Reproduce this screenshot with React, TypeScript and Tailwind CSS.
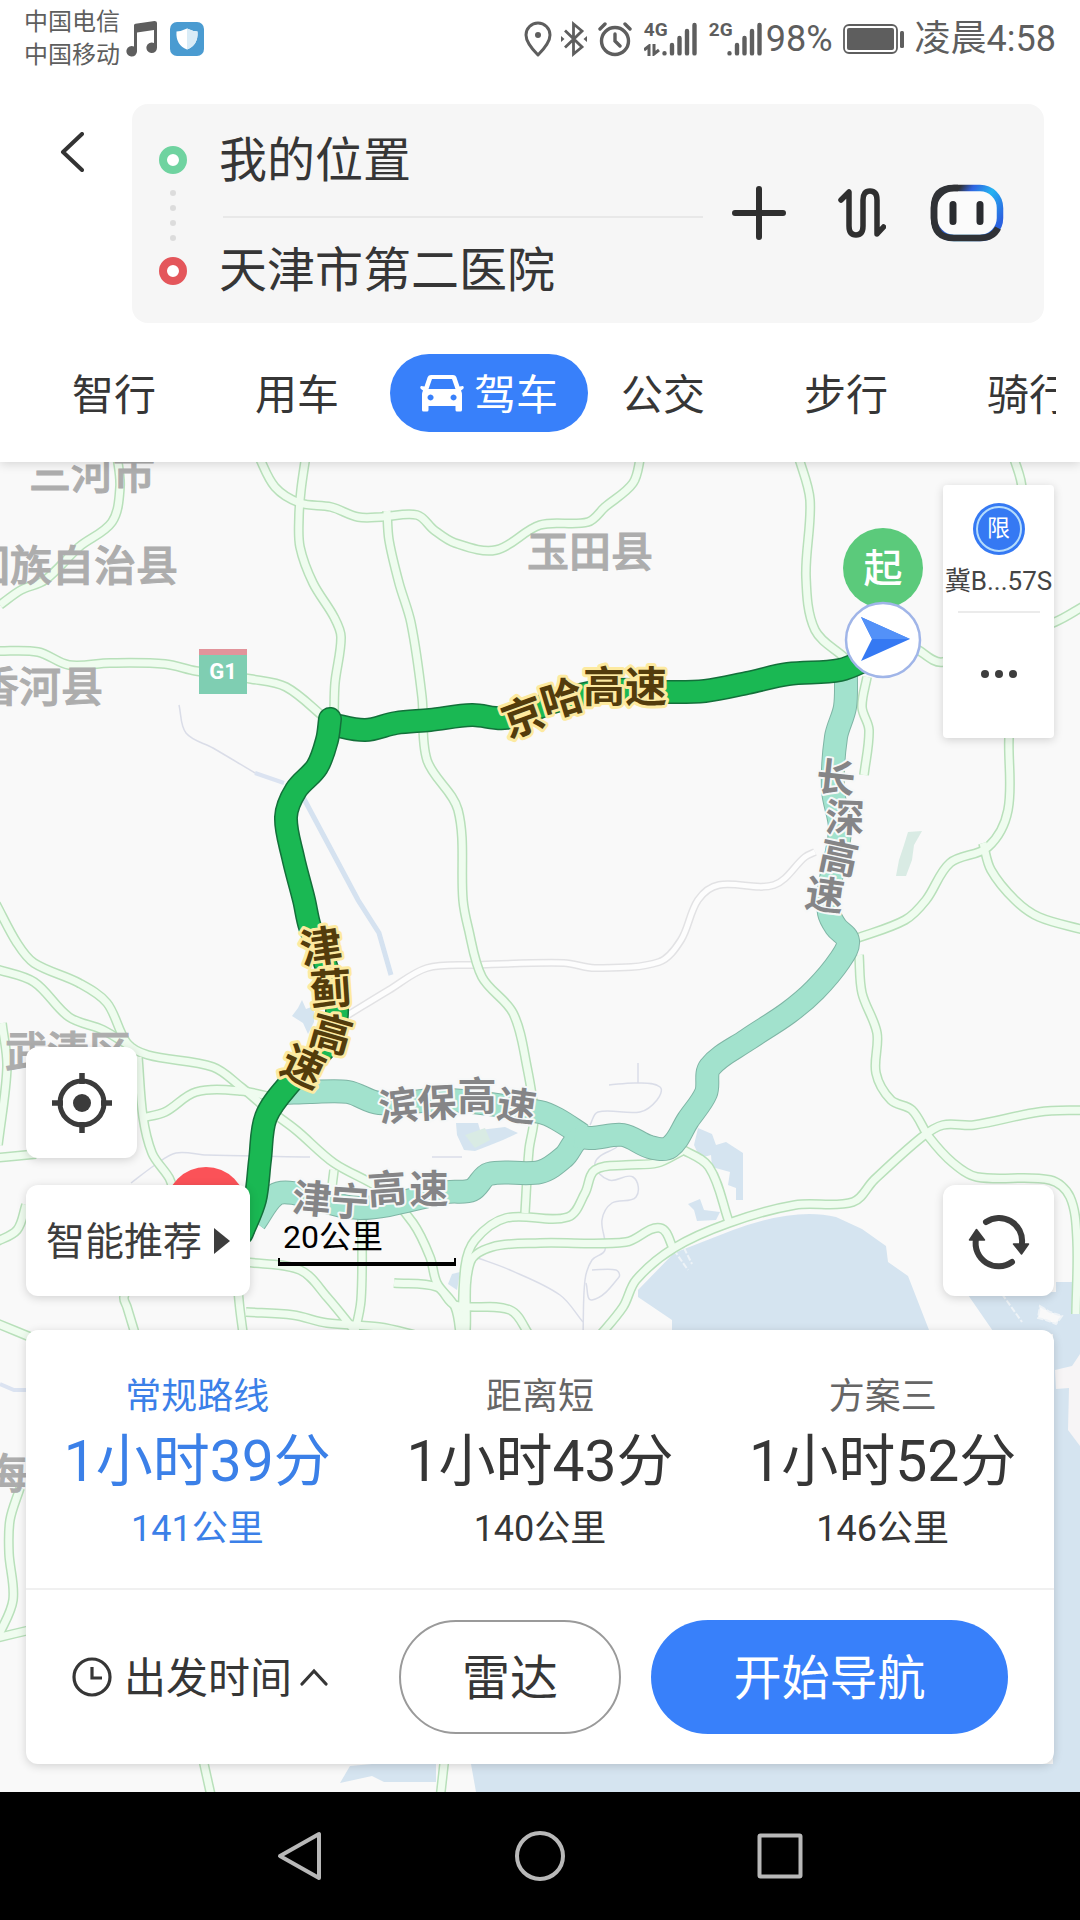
import { useState } from "react";

type Point = [number, number];

// smooth curve that runs through every point
const toPath = (points: Point[]) => {
  let d = `M${points[0][0]} ${points[0][1]}`;
  for (let i = 0; i < points.length - 1; i++) {
    const before = points[i - 1] || points[i];
    const from = points[i];
    const to = points[i + 1];
    const after = points[i + 2] || to;
    const length = Math.hypot(to[0] - from[0], to[1] - from[1]);
    const pull = (a: Point, b: Point) => {
      const span = Math.hypot(b[0] - a[0], b[1] - a[1]) || 1;
      return [((b[0] - a[0]) / span) * length * 0.33, ((b[1] - a[1]) / span) * length * 0.33];
    };
    const [ax, ay] = pull(before, to);
    const [bx, by] = pull(from, after);
    d += `C${from[0] + ax} ${from[1] + ay} ${to[0] - bx} ${to[1] - by} ${to[0]} ${to[1]}`;
  }
  return d;
};

const highways: Point[][] = [
  [[117, 455], [120, 487], [112, 522], [79, 547], [45, 580], [21, 590], [0, 605]],
  [[-4, 651], [38, 652], [69, 665], [110, 663], [165, 664], [196, 671], [251, 679], [286, 687], [325, 718]],
  [[306, 455], [301, 490], [299, 517], [300, 547], [313, 583], [334, 617], [341, 637], [335, 683], [334, 715]],
  [[258, 455], [275, 487], [300, 503], [331, 507], [358, 517], [382, 517], [417, 515], [434, 530], [455, 543], [496, 550], [540, 525], [588, 522], [605, 507], [633, 483], [641, 455]],
  [[387, 511], [389, 540], [399, 583], [411, 623], [422, 697], [427, 760], [458, 810], [463, 900], [468, 927], [482, 977], [513, 1013], [527, 1067], [534, 1117], [529, 1150], [525, 1213]],
  [[798, 455], [810, 500], [806, 577], [815, 630], [845, 658]],
  [[867, 677], [862, 707], [869, 730], [864, 775]],
  [[915, 648], [943, 662], [1055, 622], [1084, 606]],
  [[1013, 455], [1022, 490], [1009, 738], [1008, 810], [988, 847], [950, 863], [926, 900], [905, 920], [855, 939]],
  [[983, 843], [991, 870], [1015, 900], [1039, 917], [1084, 930]],
  [[-4, 904], [17, 943], [34, 963], [79, 983], [107, 1003], [127, 1043], [148, 1055], [213, 1067], [241, 1087], [265, 1107], [296, 1130], [334, 1163], [382, 1190], [413, 1223], [430, 1257], [437, 1283], [455, 1307], [461, 1340]],
  [[-4, 969], [34, 982], [69, 1017], [103, 1030], [131, 1047]],
  [[141, 1118], [165, 1112], [196, 1092], [241, 1091], [280, 1099]],
  [[138, 1057], [143, 1117], [152, 1153], [172, 1190], [140, 1250], [124, 1297], [127, 1307], [137, 1340]],
  [[2, 1023], [7, 1067], [-2, 1145]],
  [[-4, 1158], [36, 1154]],
  [[-4, 1242], [17, 1230], [26, 1205]],
  [[-4, 1323], [40, 1341]],
  [[245, 1262], [300, 1270], [327, 1297], [362, 1340]],
  [[238, 1290], [240, 1310], [244, 1340]],
  [[246, 1312], [293, 1315], [327, 1323], [379, 1327], [420, 1336]],
  [[362, 1217], [361, 1300], [353, 1340]],
  [[334, 1170], [331, 1195]],
  [[394, 1283], [437, 1287], [455, 1305], [510, 1310], [530, 1336]],
  [[462, 1340], [465, 1267], [475, 1240], [506, 1218], [568, 1217], [585, 1193], [595, 1170], [626, 1165], [657, 1163], [682, 1151]],
  [[466, 1330], [470, 1263], [492, 1247], [540, 1243], [626, 1242], [660, 1228], [674, 1250]],
  [[859, 955], [862, 993], [877, 1033], [876, 1073], [891, 1100], [912, 1110], [929, 1137], [953, 1163], [977, 1177], [1050, 1180], [1070, 1197], [1077, 1240], [1076, 1314]],
  [[1084, 1110], [1039, 1112], [974, 1125], [943, 1125], [922, 1137], [874, 1180], [853, 1202], [795, 1205], [729, 1223], [674, 1248], [636, 1280], [623, 1307], [596, 1340]],
  [[680, 1148], [709, 1167], [729, 1222]],
  [[20, 1488], [10, 1520], [9, 1553], [13, 1600], [-2, 1637]],
  [[-4, 1638], [30, 1630]],
  [[202, 1755], [212, 1800]],
  [[445, 1755], [440, 1800]],
];

const minorRoad: Point[] = [
  [815, 852], [805, 857], [774, 885], [719, 885], [698, 900], [681, 940], [659, 962], [595, 968],
  [564, 963], [475, 965], [427, 968], [389, 990], [348, 1015],
];

const streams: Point[][] = [
  [[179, 705], [186, 733], [213, 748], [255, 773]],
  [[609, 1085], [636, 1083], [660, 1087], [657, 1100], [640, 1112], [598, 1112], [590, 1125]],
  [[638, 1063], [638, 1083]],
  [[617, 1147], [595, 1163], [609, 1180], [633, 1177], [636, 1197], [612, 1203], [602, 1220], [605, 1250], [592, 1260], [585, 1280], [583, 1335]],
  [[592, 1270], [616, 1270], [619, 1277], [592, 1300], [586, 1283]],
  [[131, 1183], [155, 1165], [176, 1153], [207, 1155], [310, 1157]],
  [[475, 1257], [510, 1270], [560, 1295], [583, 1322]],
  [[432, 1157], [462, 1157]],
];

const altRoutes: Point[][] = [
  [[285, 1093], [310, 1092], [348, 1092], [379, 1103], [450, 1100], [540, 1112], [557, 1119], [582, 1135]],
  [[255, 1222], [275, 1195], [293, 1193], [360, 1208], [448, 1192], [472, 1190], [489, 1174], [540, 1172], [564, 1157], [574, 1143], [582, 1135]],
  [[846, 670], [845, 707], [836, 737], [833, 790], [840, 830], [829, 890], [829, 913], [836, 927], [848, 941], [840, 960], [815, 990], [788, 1013], [747, 1040], [710, 1067], [706, 1093], [688, 1120], [670, 1147], [650, 1147], [623, 1135], [592, 1138], [575, 1136]],
];

const mainRoute: Point[][] = [
  [[330, 724], [365, 730], [396, 723], [430, 720], [472, 715], [506, 718], [560, 700], [610, 690], [667, 692], [705, 691], [747, 683], [788, 674], [840, 670], [872, 657]],
  [[330, 719], [327, 740], [317, 767], [296, 790], [286, 817], [293, 857], [304, 900], [310, 927], [324, 960], [337, 1008], [327, 1045], [290, 1083], [266, 1117], [260, 1160], [255, 1200], [242, 1233]],
];

const places = [
  { name: "三河市", x: 29, y: 489 },
  { name: "回族自治县", x: -32, y: 581 },
  { name: "香河县", x: -23, y: 702 },
  { name: "玉田县", x: 527, y: 567 },
  { name: "武清区", x: 5, y: 1067 },
  { name: "海", x: -15, y: 1489 },
];

// x, y, rotation of each character along the road
type RoadLabel = { text: string; active?: boolean; at: [number, number, number][] };

const roadLabels: RoadLabel[] = [
  { text: "京哈高速", active: true, at: [[523, 717, -20], [562, 699, -17], [604, 687, 0], [646, 687, 0]] },
  { text: "津蓟高速", active: true, at: [[321, 947, -8], [331, 989, -4], [331, 1034, 16], [303, 1067, 25]] },
  { text: "长深高速", at: [[836, 777, 6], [845, 817, 2], [839, 857, 12], [825, 894, 8]] },
  { text: "滨保高速", at: [[398, 1105, -6], [437, 1102, -3], [477, 1095, 0], [517, 1105, 8]] },
  { text: "津宁高速", at: [[312, 1198, 5], [350, 1201, 4], [387, 1188, -4], [429, 1188, 0]] },
];

const tabs = ["智行", "用车", "驾车", "公交", "步行", "骑行"];

const routes = [
  { title: "常规路线", time: "1小时39分", distance: "141公里" },
  { title: "距离短", time: "1小时43分", distance: "140公里" },
  { title: "方案三", time: "1小时52分", distance: "146公里" },
];

const SignalBars = () => (
  <svg className="h-[34px] w-[35px]" viewBox="0 0 35 34" stroke="currentColor" strokeWidth="4.4" strokeLinecap="round">
    <path d="M2.5 31.2v.2M10 23v8.4M17.5 16v15.4M25 9v22.4M32.5 3v28.4" />
  </svg>
);

const StatusBar = () => (
  <div className="flex h-[76px] items-center justify-between pt-px pr-6 pl-6 text-[#5e5e5e]">
    <div className="flex items-center">
      <div className="text-2xl leading-[33px]">
        <p>中国电信</p>
        <p>中国移动</p>
      </div>
      <svg className="mr-3 ml-1.5 h-9 w-8" viewBox="0 0 32 36" fill="currentColor">
        <path d="M8 4.5Q8 3 9.500 2.700L28.500 0Q31 0 31 2V26.500A5.300 5.300 0 1 1 28 22V9L11 11.500V30A5.300 5.300 0 1 1 8 25.500Z" />
      </svg>
      <svg className="h-[34px] w-[34px]" viewBox="0 0 34 34">
        <rect width="34" height="34" rx="7" fill="#4a9bd1" />
        <path d="M17 6.500Q22 9 27.500 9.500Q28.500 23 17 27.500Q5.500 23 6.500 9.500Q12 9 17 6.500Z" fill="#fff" />
        <path d="M17 6.500Q22 9 27.500 9.500Q28.500 23 17 27.500Z" fill="#d9ecf7" />
      </svg>
    </div>
    <div className="flex items-center text-[36px] leading-10">
      <svg className="mr-2 h-9 w-7" viewBox="0 0 28 36" fill="none" stroke="currentColor" strokeWidth="3">
        <path d="M14 34Q2 22 2 14A12 12 0 0 1 26 14Q26 22 14 34Z" strokeLinejoin="round" />
        <circle cx="14" cy="14" r="3" fill="currentColor" stroke="none" />
      </svg>
      <svg className="mr-2.5 h-9 w-7" viewBox="0 0 28 36" fill="none" stroke="currentColor" strokeWidth="2.800">
        <path d="M5 9.500L22 26L13.500 33V3L22 10L5 26.500" />
        <path d="M1 15l3.500 3L1 21ZM27 15l-3.500 3L27 21Z" fill="currentColor" stroke="none" />
      </svg>
      <svg className="mr-3 h-9 w-[34px]" viewBox="0 0 34 36" fill="none" stroke="currentColor" strokeWidth="3.400" strokeLinecap="round">
        <circle cx="17" cy="20" r="13.500" />
        <path d="M17 13v7l5 5M2 8l5-5M32 8l-5-5" />
      </svg>
      <div className="flex h-[34px] w-[18px] flex-col justify-between">
        <span className="text-[19px] leading-4 font-bold">4G</span>
        <svg className="h-3 w-4" viewBox="0 0 16 12" fill="none" stroke="currentColor" strokeWidth="3">
          <path d="M0 6l5-4v10M10 0v10l5-4" />
        </svg>
      </div>
      <SignalBars />
      <span className="ml-3 h-[34px] w-[18px] text-[19px] leading-4 font-bold">2G</span>
      <SignalBars />
      <span className="ml-1">98%</span>
      <svg className="mr-2.5 ml-2.5 h-[30px] w-[62px]" viewBox="0 0 62 30">
        <rect x="1" y="1" width="53" height="28" rx="5" fill="none" stroke="currentColor" strokeWidth="1.800" />
        <rect x="4" y="4" width="47" height="22" rx="2" fill="currentColor" />
        <rect x="57" y="7" width="4" height="17" rx="1.500" fill="currentColor" />
      </svg>
      <span>凌晨4:58</span>
    </div>
  </div>
);

const SearchHeader = () => (
  <div className="mt-7 flex pr-9">
    <button aria-label="返回" className="flex w-[132px] items-start pt-7 pl-[60px]">
      <svg className="h-10 w-6" viewBox="0 0 24 40" fill="none" stroke="#333" strokeWidth="4" strokeLinecap="round" strokeLinejoin="round">
        <path d="M22 2L3 20L22 38" />
      </svg>
    </button>
    <div className="flex flex-1 items-center rounded-2xl bg-[#f6f6f6] pr-10 pb-px pl-[27px]">
      <div className="flex flex-col items-center pt-1">
        <span className="size-7 rounded-full border-8 border-[#6fd3a0] bg-white" />
        <div className="flex flex-col gap-[9px] py-4">
          {[0, 1, 2, 3].map((dot) => (
            <span key={dot} className="size-1.5 rounded-full bg-[#dcdcdc]" />
          ))}
        </div>
        <span className="size-7 rounded-full border-8 border-[#e4565b] bg-white" />
      </div>
      <div className="ml-8 flex-1 text-5xl text-[#363636]">
        <input aria-label="起点" defaultValue="我的位置" className="block h-[112px] w-full bg-transparent pb-2 outline-none" />
        <div className="ml-1 h-0.5 bg-[#e8e8e8]" />
        <input aria-label="终点" defaultValue="天津市第二医院" className="block h-[104px] w-full bg-transparent pb-2 outline-none" />
      </div>
      <div className="ml-[29px] flex items-center gap-11">
        <button aria-label="添加途经点">
          <svg className="size-[54px]" viewBox="0 0 54 54" stroke="#2f2f2f" strokeWidth="6" strokeLinecap="round">
            <path d="M27 3v48M3 27h48" />
          </svg>
        </button>
        <button aria-label="交换起终点">
          <svg className="h-[50px] w-14" viewBox="-8 0 56 50" fill="none" stroke="#2f2f2f" strokeWidth="5.500" strokeLinecap="round" strokeLinejoin="round">
            <path d="M3 12L11 4V38Q11 47 18 47T25 38V12Q25 3 32 3T39 12V46L45.500 39" />
          </svg>
        </button>
        <button aria-label="语音助手">
          <svg className="h-[58px] w-[74px]" viewBox="0 0 74 58">
            <defs>
              <linearGradient id="assistant" gradientUnits="userSpaceOnUse" x1="26" y1="4" x2="72" y2="34">
                <stop offset="0.050" stopColor="#303236" />
                <stop offset="0.250" stopColor="#2f62e0" />
                <stop offset="0.580" stopColor="#25b4f2" />
                <stop offset="1" stopColor="#2b62e0" />
              </linearGradient>
            </defs>
            <rect x="4" y="4" width="66" height="50" rx="20" fill="#fbfbfb" stroke="url(#assistant)" strokeWidth="6.500" />
            <path d="M28 4H24Q4 4 4 24V34Q4 54 24 54H50Q63 54 68 44" fill="none" stroke="#303236" strokeWidth="6.500" />
            <path d="M23 20.500v17M50 20.500v17" stroke="#2a2c30" strokeWidth="7" strokeLinecap="round" />
          </svg>
        </button>
      </div>
    </div>
  </div>
);

const CarIcon = () => (
  <svg className="h-[38px] w-11" viewBox="0 0 44 38" fill="currentColor">
    <path
      fillRule="evenodd"
      d="M11 1H33Q35.500 1 36.300 3L39.500 12.500L43 12Q44.500 13.500 43 15L41 16.500Q42 18.500 42 21V36Q42 37.500 40.500 37.500H37Q35.500 37.500 35.500 36V32H8.500V36Q8.500 37.500 7 37.500H3.500Q2 37.500 2 36V21Q2 18.500 3 16.500L1 15Q-.5 13.500 1 12L4.500 12.500L7.700 3Q8.500 1 11 1ZM12 5L8.500 15H35.500L32 5ZM10.500 20.500a3 3 0 1 0 .1 0ZM33.500 20.500a3 3 0 1 0 .1 0Z"
    />
  </svg>
);

const TravelTabs = ({ active, onSelect }: { active: string; onSelect: (tab: string) => void }) => (
  <nav className="mr-6 flex h-[139px] items-center gap-[99px] overflow-hidden pl-[72px] text-[42px] text-[#363636]">
    {tabs.map((tab) =>
      tab === active ? (
        <button
          key={tab}
          onClick={() => onSelect(tab)}
          className="-mr-[66px] -ml-12 flex h-[78px] w-[198px] shrink-0 items-center justify-center gap-2.5 rounded-full bg-[#3880fa] text-white"
        >
          <CarIcon />
          <span className="pt-1.5">{tab}</span>
        </button>
      ) : (
        <button key={tab} onClick={() => onSelect(tab)} className="shrink-0 pt-1.5">
          {tab}
        </button>
      )
    )}
  </nav>
);

const MapCanvas = () => (
  <svg className="absolute inset-0 size-full" viewBox="0 462 1080 1330" preserveAspectRatio="xMidYMid slice">
    <rect x="-1000" y="0" width="3000" height="2400" fill="#f9f9f9" />

    {/* water */}
    <g fill="#d5e4f0">
      <path d="M638 1290L674 1253L733 1230Q795 1207 836 1217L862 1229L886 1246L888 1262L908 1276L929 1330H672V1320L638 1297Z" />
      <path d="M966 1292L995 1334H1080V1282H1056V1292Z" />
      <path d="M1053 1330H1080V1792H476L471 1764H1053Z" />
      <path d="M698 1128L712 1134L716 1145L726 1142L743 1153V1200H736V1188L728 1185L730 1172L712 1167L711 1155L700 1158L694 1145Z" />
      <path d="M688 1204L700 1199L704 1210L720 1212L716 1220L697 1221L694 1210Z" />
      <path d="M456 1123H478L480 1130L505 1127L518 1133L503 1140L488 1146L475 1151L464 1150L457 1135Z" />
      <path d="M292 1016L298 1008L302 1000L306 1009L314 1006V1022L308 1034L303 1023Z" />
      <path d="M448 1284L452 1274L460 1272L457 1290Z" />
      <path d="M340 1783L350 1766L372 1764H436V1782H384L372 1776Z" />
    </g>
    <path d="M465 1135L485 1128L490 1140L475 1148ZM904 845L908 832L922 831L914 845L912 860L906 876H896L899 860Z" fill="#d9ebe4" />
    <path d="M1055 1370L1072 1366L1080 1354V1446L1068 1430L1069 1388L1056 1389Z" fill="#f7f5f6" />
    <path d="M1040 1306L1050 1312L1062 1316L1056 1324L1046 1320L1038 1318ZM1002 1294L1022 1322M674 1250L688 1270M684 1248L692 1264" fill="#f9f9f9" stroke="#eef3f7" strokeWidth="2" strokeDasharray="6 2" />
    <path d="M303 797L358 900L379 933L391 975" fill="none" stroke="#d5e2f0" strokeWidth="5" />
    <path d="M255 773L284 783M0 1384L14 1390H27" fill="none" stroke="#dbe3f1" strokeWidth="4" />
    <g fill="none" stroke="#dadde8" strokeWidth="1.500">
      {streams.map((points, i) => (
        <path key={i} d={toPath(points)} />
      ))}
    </g>

    {/* road network */}
    <g fill="none" strokeLinejoin="round">
      <path d={toPath(minorRoad)} stroke="#e2e2e4" strokeWidth="8" />
      <path d={toPath(minorRoad)} stroke="#fdfdfd" strokeWidth="5" />
      {highways.map((points, i) => (
        <path key={i} d={toPath(points)} stroke="#b8e0ba" strokeWidth="10" />
      ))}
      {highways.map((points, i) => (
        <path key={i} d={toPath(points)} stroke="#effcef" strokeWidth="7" />
      ))}
    </g>

    <g>
      <rect x="199" y="649" width="48" height="45" fill="#7fceb2" />
      <rect x="199" y="649" width="48" height="6" fill="#e2949b" />
      <text x="223" y="679" textAnchor="middle" className="fill-white text-[22px] font-bold">G1</text>
    </g>

    <g className="fill-[#adadad] stroke-[#adadad] stroke-1 text-[42px] font-medium">
      {places.map((place) => (
        <text key={place.name} x={place.x} y={place.y}>{place.name}</text>
      ))}
    </g>

    {/* destination pin */}
    <circle cx="206" cy="1207" r="40" fill="#fb5258" />

    {/* routes */}
    <g fill="none" strokeLinejoin="round">
      {altRoutes.map((points, i) => (
        <path key={i} d={toPath(points)} stroke="#7fb5a5" strokeWidth="24" />
      ))}
      {altRoutes.map((points, i) => (
        <path key={i} d={toPath(points)} stroke="#a2e2cd" strokeWidth="22" />
      ))}
      {mainRoute.map((points, i) => (
        <g key={i} strokeLinecap="round">
          <path d={toPath(points)} stroke="#13703a" strokeWidth="24" />
          <path d={toPath(points)} stroke="#1ab853" strokeWidth="21" />
        </g>
      ))}
    </g>

    {roadLabels.map((label) =>
      label.at.map(([x, y, angle], i) => (
        <text
          key={`${label.text}${i}`}
          transform={`translate(${x} ${y}) rotate(${angle})`}
          y="15"
          textAnchor="middle"
          paintOrder="stroke"
          strokeLinejoin="round"
          className={
            label.active
              ? "fill-[#533c0c] stroke-[#fdeaa0] stroke-[6px] text-[42px] font-bold"
              : "fill-[#858587] stroke-[#f6f8f8] stroke-[4px] text-[39px] font-bold"
          }
        >
          {label.text[i]}
        </text>
      ))
    )}

    {/* start pin and current position */}
    <circle cx="883" cy="568" r="40" fill="#5bca7b" />
    <text x="883" y="582" textAnchor="middle" className="fill-white text-[39px] font-medium">起</text>
    <circle cx="883" cy="640" r="37" fill="#fff" stroke="#a0b5e8" strokeWidth="2.500" />
    <path d="M861 617L910 639L861 661L872 639Z" fill="#3579f3" />
    <path d="M861 617L910 639H872Z" fill="#5391f8" />
  </svg>
);

const cardClass = "bg-white shadow-[0_2px_10px_rgba(0,0,0,0.16)]";

const MapOverlay = () => (
  <div className="relative flex flex-1 flex-col px-[26px] pt-[23px] pb-7">
    <div className={`${cardClass} flex h-[253px] w-[111px] flex-col items-center self-end rounded-sm`}>
      <button className="flex flex-col items-center text-[26px] leading-8 whitespace-nowrap text-[#444]">
        <span className="mt-[18px] flex size-[52px] items-center justify-center rounded-full bg-[#3579f3] p-[3px]">
          <span className="flex size-full items-center justify-center rounded-full border-2 border-[#b4dcfc] text-[23px] text-white">限</span>
        </span>
        <span className="mt-2.5">冀B...57S</span>
      </button>
      <div className="mt-3.5 h-0.5 w-[82px] bg-[#ebebeb]" />
      <button aria-label="更多" className="flex w-full flex-1 justify-center gap-1.5 pt-[57px]">
        {[0, 1, 2].map((dot) => (
          <span key={dot} className="size-2 rounded-full bg-[#3d3d3d]" />
        ))}
      </button>
    </div>

    <button aria-label="定位" className={`${cardClass} mt-auto flex size-[111px] items-center justify-center rounded-xl`}>
      <svg className="size-[60px]" viewBox="0 0 60 60" fill="none" stroke="#3b3b3b">
        <circle cx="30" cy="30" r="22" strokeWidth="5" />
        <circle cx="30" cy="30" r="9" fill="#3b3b3b" stroke="none" />
        <path d="M30 0v11M30 49v11M0 30h11M49 30h11" strokeWidth="5.500" />
      </svg>
    </button>

    <div className="mt-[27px] flex">
      <button className={`${cardClass} flex h-[111px] w-[224px] items-center justify-center gap-3 rounded-xl text-[39px] whitespace-nowrap text-[#3d3d3d]`}>
        <span className="pt-1">智能推荐</span>
        <svg className="h-7 w-4" viewBox="0 0 16 28" fill="currentColor">
          <path d="M0 1L16 14L0 27Z" />
        </svg>
      </button>
      <div className="ml-7 w-[178px] pt-[34px] text-black">
        <p className="pl-[5px] text-[32px] leading-9">20公里</p>
        <div className="mt-[3px] h-2 border-x-2 border-b-4 border-black" />
      </div>
      <button aria-label="刷新" className={`${cardClass} ml-auto flex size-[111px] items-center justify-center rounded-xl`}>
        <svg className="size-[62px]" viewBox="0 0 62 62" fill="none" stroke="#3b3b3b" strokeWidth="6" strokeLinecap="round">
          <path d="M18 12A23 23 0 0 1 54 33" />
          <path d="M44 52A23 23 0 0 1 8 29" />
          <path d="M45.500 34H60.500L53.500 44ZM1.500 30H16.500L8.500 19.500Z" fill="#3b3b3b" stroke="#3b3b3b" strokeWidth="1.500" strokeLinejoin="round" />
        </svg>
      </button>
    </div>

    <RoutePanel />
  </div>
);

const RoutePanel = () => {
  const [selected, setSelected] = useState(0);

  return (
    <section className={`${cardClass} mt-[34px] rounded-xl`}>
      <div className="grid h-[258px] grid-cols-3 pt-[46px]">
        {routes.map((route, index) => (
          <button
            key={route.title}
            onClick={() => setSelected(index)}
            className={`flex flex-col items-center whitespace-nowrap ${index === selected ? "text-[#3b80e8]" : "text-[#363636]"}`}
          >
            <span className={`text-[36px] leading-[42px] ${index === selected ? "" : "text-[#666]"}`}>{route.title}</span>
            <span className="mt-2.5 text-[57px] leading-[68px]">{route.time}</span>
            <span className="mt-3 text-[36px] leading-[42px]">{route.distance}</span>
          </button>
        ))}
      </div>
      <div className="h-0.5 bg-[#f0f0f0]" />
      <div className="flex items-center px-[46px] py-[30px] text-5xl text-[#363636]">
        <button className="flex items-center text-[42px]">
          <svg className="mr-3 size-10" viewBox="0 0 40 40" fill="none" stroke="currentColor" strokeWidth="3.200">
            <circle cx="20" cy="20" r="18" />
            <path d="M20 10v11h10" />
          </svg>
          <span className="pt-1">出发时间</span>
          <svg className="ml-2 h-[18px] w-7" viewBox="0 0 28 18" fill="none" stroke="currentColor" strokeWidth="3.200" strokeLinecap="round">
            <path d="M2 16L14 3L26 16" />
          </svg>
        </button>
        <button className="ml-auto h-[114px] w-[222px] rounded-full border-2 border-[#9a9a9a] pt-1">雷达</button>
        <button className="ml-[30px] h-[114px] w-[357px] rounded-full bg-[#3880fa] pt-1 text-white">开始导航</button>
      </div>
    </section>
  );
};

const SystemNav = () => (
  <footer className="flex h-32 items-center justify-center gap-[190px] bg-black text-[#b8b8b8]">
    <button aria-label="返回上一页">
      <svg className="size-[50px]" viewBox="0 0 50 50" fill="none" stroke="currentColor" strokeWidth="4" strokeLinejoin="round">
        <path d="M44 3V47L5 25Z" />
      </svg>
    </button>
    <button aria-label="主屏幕">
      <svg className="size-[50px]" viewBox="0 0 50 50" fill="none" stroke="currentColor" strokeWidth="4">
        <circle cx="25" cy="25" r="23" />
      </svg>
    </button>
    <button aria-label="最近任务">
      <svg className="size-[50px]" viewBox="0 0 50 50" fill="none" stroke="currentColor" strokeWidth="4">
        <rect x="4.500" y="4.500" width="41" height="41" rx="1" />
      </svg>
    </button>
  </footer>
);

const App: React.FC = () => {
  const [tab, setTab] = useState("驾车");

  return (
    <div className="flex min-h-screen flex-col bg-white font-['Roboto','Noto_Sans_CJK_SC',sans-serif]">
      <header className="relative z-10 bg-white shadow-[0_2px_10px_rgba(0,0,0,0.15)]">
        <StatusBar />
        <SearchHeader />
        <TravelTabs active={tab} onSelect={setTab} />
      </header>
      <main className="relative flex flex-1 flex-col overflow-hidden">
        <MapCanvas />
        <MapOverlay />
      </main>
      <SystemNav />
    </div>
  );
};

export default App;
